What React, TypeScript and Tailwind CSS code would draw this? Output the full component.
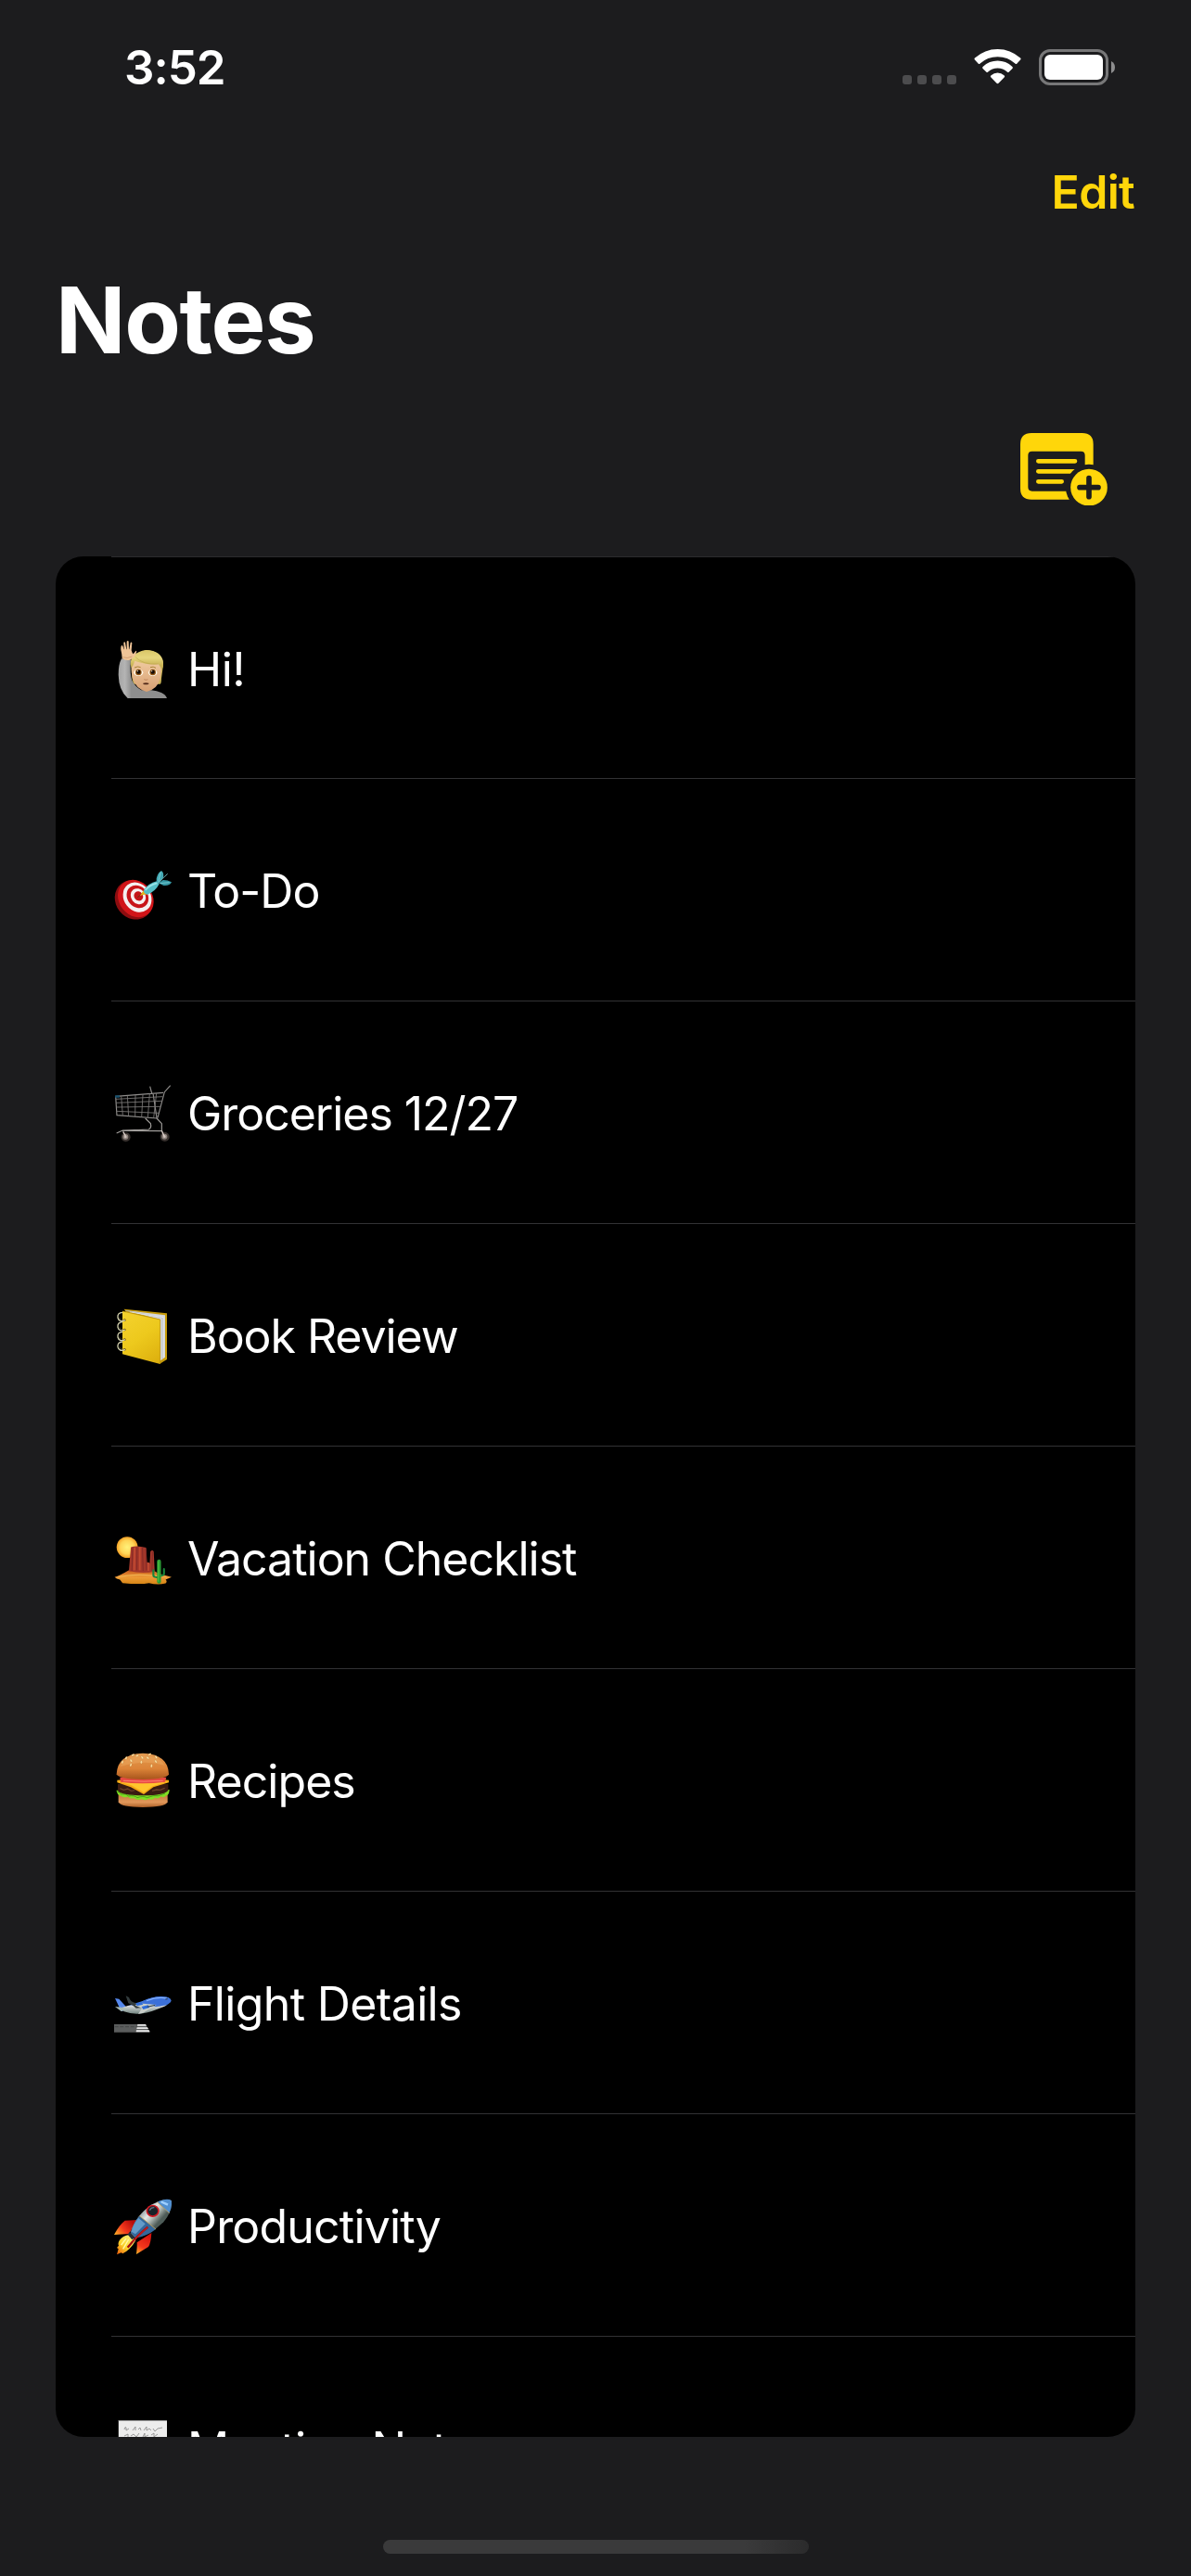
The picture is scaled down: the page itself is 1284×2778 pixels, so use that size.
import type { ReactNode } from "react";

function Emoji({ viewBox = "69 60 186 186", children }: { viewBox?: string; children: ReactNode }) {
  return (
    <svg viewBox={viewBox} className="h-[62px] w-[62px] shrink-0" fill="none" aria-hidden="true">
      {children}
    </svg>
  );
}

function PersonRaisingHand() {
  return (
    <Emoji viewBox="219 300 186 186">
      <defs>
        <linearGradient id="sleeve" x1="233" y1="0" x2="275" y2="0" gradientUnits="userSpaceOnUse">
          <stop stopColor="#a3a3a3" />
          <stop offset="0.5" stopColor="#b4b4b4" />
          <stop offset="1" stopColor="#8e8e8e" />
        </linearGradient>
        <linearGradient id="skin" x1="0" y1="350" x2="0" y2="466" gradientUnits="userSpaceOnUse">
          <stop stopColor="#f3d0a6" />
          <stop offset="1" stopColor="#d79f72" />
        </linearGradient>
        <linearGradient id="hair" x1="0" y1="330" x2="0" y2="380" gradientUnits="userSpaceOnUse">
          <stop stopColor="#d9c667" />
          <stop offset="0.5" stopColor="#e6d67d" />
          <stop offset="1" stopColor="#c9b255" />
        </linearGradient>
      </defs>
      <path d="M275 384q-3-40 48-54q56 6 55 48l-6 44q0 18-5 18h-83q-8-6-9-56z" fill="url(#hair)" />
      <path d="M243 358q-10 18-10 52q1 50 30 76h127q-4-12-18-18q-14-6-33-8l-32 0q-20-12-30-32q-8-20-4-66z" fill="url(#sleeve)" />
      <path d="M275 392q0-24 6-28q50 18 90 10q2 30-3 48q-8 34-44 43q-36-10-46-45q-3-14-3-28z" fill="url(#skin)" />
      <path d="M272 376q0-38 50-46q52 2 56 42q0 18-6 20q-3-8-10-17q-50 4-75-23q0 20-12 36z" fill="url(#hair)" />
      <path d="M287 352q26 27 75 23" stroke="#b69e48" strokeWidth="1.5" />
      <path d="M245 358q-1-18-4-28q-1-14 3-16q4 1 6 14l1 0l-1-22q3-4 5 0l4 22h1v-26q4-4 6 0l1 26h1l4-22q4-3 5 1l-2 24q2 8 6 12l8-10q4-2 2 4q-2 14-13 20l-7 5q-14 3-26-4z" fill="#efc497" />
      <path d="M247 353q14 6 30-2" stroke="#c58f62" strokeWidth="2" />
      <ellipse cx="298" cy="403" rx="15" ry="11" fill="#fff8e9" />
      <ellipse cx="344" cy="403" rx="14" ry="11" fill="#fff8e9" />
      <circle cx="298" cy="402" r="10" fill="#965714" />
      <circle cx="344" cy="402" r="10" fill="#965714" />
      <circle cx="298" cy="401" r="6.500" fill="#170c04" />
      <circle cx="344" cy="401" r="6.500" fill="#170c04" />
      <circle cx="295" cy="398" r="1.800" fill="#fff" />
      <circle cx="341" cy="398" r="1.800" fill="#fff" />
      <path d="M285 387q10-6 20-1M336 386q10-4 18 2" stroke="#a98338" strokeWidth="3" />
      <path d="M316 425q6 4 12 0" stroke="#b87c50" strokeWidth="2.500" />
      <path d="M313 437q9-2 18 0v3q-9 3-18 0z" fill="#532a1a" />
    </Emoji>
  );
}

function Dart() {
  return (
    <Emoji>
      <ellipse cx="133" cy="181" rx="59" ry="66" transform="rotate(-38 133 181)" fill="#8d0d10" />
      <ellipse cx="139" cy="177" rx="54" ry="64" transform="rotate(-38 139 177)" fill="#d01519" />
      <ellipse cx="144" cy="173" rx="43" ry="51" transform="rotate(-38 144 173)" fill="#f4f0f0" />
      <ellipse cx="145" cy="171" rx="33" ry="39" transform="rotate(-38 145 171)" fill="#c81519" />
      <ellipse cx="147" cy="170" rx="23" ry="27" transform="rotate(-38 147 170)" fill="#f6f1f1" />
      <ellipse cx="148" cy="169" rx="14" ry="16" transform="rotate(-38 148 169)" fill="#c5161a" />
      <path d="M145 173l22-18" stroke="#6b3410" strokeWidth="3" />
      <path d="M152 168l13-18 14 13-16 2z" fill="#e3b419" />
      <path d="M165 150q14-22 42-29l8 9q-12 24-38 34q-13-2-12-14z" fill="#56bfc7" />
      <path d="M170 150q14-17 38-23" stroke="#9be4e8" strokeWidth="5" />
      <path d="M206 121q-1-24 16-34q9 6 6 22l-14 19z" fill="#43a9b4" />
      <path d="M213 127l14-10q16 0 28 7q-6 13-26 11z" fill="#3697a4" />
      <path d="M210 127l32-30M220 91l-8 31M248 125l-31 3" stroke="#7fd0d6" strokeWidth="2.500" />
    </Emoji>
  );
}

function ShoppingCart() {
  return (
    <Emoji>
      <path d="M251 62l-19 21-22 83M74 97l154-12M77 158l131 10M74 97l4 63M185 65l6 22M195 87l12 80" stroke="#8f8d8b" strokeWidth="3.500" />
      <path d="M75 106l151-8M75 118l148-6M76 132l143-2M77 145l138 6M92 97l5 61M112 95l4 66M138 93l-1 69M162 91l-4 74M184 89l-6 77M206 87l-9 80" stroke="#7b7977" strokeWidth="2.600" />
      <path d="M170 168l17 17q4 14-6 19l-85 4M207 168l16 17v24M77 216l18-8 128 1" stroke="#a19e9b" strokeWidth="3.500" />
      <path d="M72 94h15v7h-15z" fill="#17516f" />
      <circle cx="107" cy="229" r="15" fill="#39322f" />
      <circle cx="233" cy="228" r="15" fill="#39322f" />
      <circle cx="106" cy="228" r="9" fill="#8f857f" />
      <circle cx="232" cy="227" r="9" fill="#8f857f" />
      <circle cx="106" cy="228" r="4" fill="#d0c3bd" />
      <circle cx="232" cy="227" r="4" fill="#d0c3bd" />
      <path d="M98 211l8 14M223 208l8 18" stroke="#ddd1cb" strokeWidth="4" />
    </Emoji>
  );
}

function Ledger() {
  return (
    <Emoji>
      <defs>
        <linearGradient id="cover" x1="97" y1="70" x2="218" y2="240" gradientUnits="userSpaceOnUse">
          <stop stopColor="#f4d22f" />
          <stop offset="0.5" stopColor="#edc91d" />
          <stop offset="1" stopColor="#dcae0d" />
        </linearGradient>
      </defs>
      <path d="M101 65l139 14v149l-23 14z" fill="#c59b0b" />
      <path d="M104 69l130 16v136l-17 12V98z" fill="#d4d7dc" />
      <path d="M106 70l120 23v132" stroke="#a3a7ad" strokeWidth="2" />
      <path d="M120 75l108 17v131" stroke="#f4f4f4" strokeWidth="2" />
      <path d="M96 72l122 27v144L96 211z" fill="url(#cover)" />
      <path d="M96 72l122 27v143" stroke="#b78c08" strokeWidth="2" />
      {[90, 121, 153, 185].map((y) => (
        <g key={y}>
          <circle cx="103" cy={y + 11} r="4" fill="#6f5707" />
          <path d={`M105 ${y + 11}q-20 8-24-8q-2-16 15-17`} stroke="#d2d0ad" strokeWidth="4" />
          <path d={`M99 ${y + 10}q-12 1-14-9`} stroke="#706a42" strokeWidth="1.500" />
        </g>
      ))}
    </Emoji>
  );
}

function Desert() {
  return (
    <Emoji viewBox="64.400 56 173.600 173.600">
      <defs>
        <radialGradient id="sun">
          <stop stopColor="#fff27a" />
          <stop offset="0.65" stopColor="#ffd456" />
          <stop offset="1" stopColor="#f2a025" />
        </radialGradient>
        <linearGradient id="sand" x1="0" y1="178" x2="0" y2="220" gradientUnits="userSpaceOnUse">
          <stop stopColor="#c85c1e" />
          <stop offset="0.5" stopColor="#ed9b36" />
          <stop offset="1" stopColor="#d58413" />
        </linearGradient>
      </defs>
      <circle cx="104" cy="108" r="32" fill="url(#sun)" />
      <path d="M66 198q16-4 42-20h75q16 12 55 20l-18 8q6 6 0 11q-24 6-50-1q-27 5-80 0l-8-10q-11-2-16-8z" fill="url(#sand)" />
      <path d="M109 180l6-72q16-7 46 1l3 44 8 4 2-36q6-7 10 0l3 60q-35 8-78-1z" fill="#a4372a" />
      <path d="M121 108l-3 71M134 107l-1 70M150 108l2 71M160 112l2 65M180 121l-1 58" stroke="#862b27" strokeWidth="3" />
      <path d="M126 109l-1 69M142 108v70M168 154v25" stroke="#c14a32" strokeWidth="5" />
      <path d="M74 199q60-15 150 0" stroke="#f1b250" strokeWidth="3" />
      <path d="M183 177v16q0 5 15 6M215 174v14q0 5-15 7" stroke="#19843a" strokeWidth="6" strokeLinecap="round" />
      <path d="M200 151v61" stroke="#2b9c35" strokeWidth="12" strokeLinecap="round" />
      <path d="M198 150v62" stroke="#51c33d" strokeWidth="3" />
    </Emoji>
  );
}

function Hamburger() {
  return (
    <Emoji>
      <defs>
        <linearGradient id="bun" x1="0" y1="62" x2="0" y2="145" gradientUnits="userSpaceOnUse">
          <stop stopColor="#e29a50" />
          <stop offset="0.6" stopColor="#dc8438" />
          <stop offset="1" stopColor="#aa571d" />
        </linearGradient>
        <linearGradient id="heel" x1="0" y1="195" x2="0" y2="237" gradientUnits="userSpaceOnUse">
          <stop stopColor="#c8793c" />
          <stop offset="0.6" stopColor="#e1985b" />
          <stop offset="1" stopColor="#ad6027" />
        </linearGradient>
      </defs>
      <path d="M83 194h159v26q-7 17-80 17q-72 0-79-17z" fill="url(#heel)" />
      <path d="M77 182l171-2q-1 18-10 19q-8 9-17 3q-9 10-20 4q-8 10-20 3q-12 9-23 1q-13 7-24-2q-13 3-20-5q-15 5-21-2q-15-3-16-19z" fill="#83dc24" />
      <path d="M77 185q10 3 15 10q15-4 24 6q18-4 28 5q20-7 31 0q23-9 37-6l22-8" stroke="#48a616" strokeWidth="3" />
      <path d="M81 162h163v20q-9 16-81 17q-74-1-82-16z" fill="#3a1c12" />
      <path d="M88 176l12 5 13-4 11 7 12-2m56 2 14-4 12 1 15-6" stroke="#69402a" strokeWidth="4" />
      <path d="M79 149q82-10 167 0v8l-50 15-31 23q-24-13-42-23l-44-15z" fill="#f6a916" />
      <path d="M83 154q73 5 160 0l-50 15-28 20-40-23z" fill="#ffc62d" />
      <path d="M88 140h150l-4 15q-75 9-144 0z" fill="#e84a42" />
      <path d="M99 151q68 5 128 0" stroke="#ff8072" strokeWidth="3" />
      <path d="M77 130q2-65 85-68q82 3 84 68q-4 16-84 17q-80-1-85-17z" fill="url(#bun)" />
      <path d="M88 106q17-34 70-36q56 0 74 31q-67-20-144 5z" fill="#efb067" fillOpacity=".4" />
      {[[108, 78, 30], [124, 86, -35], [144, 70, 70], [160, 76, -40], [178, 77, -50], [184, 66, 60], [130, 68, 60], [205, 75, -35], [204, 89, -40], [190, 103, 5], [123, 100, 20], [96, 91, 25], [157, 91, 0]].map(([x, y, r]) => (
        <ellipse key={`${x}-${y}`} cx={x} cy={y} rx="3" ry="5.500" transform={`rotate(${r} ${x} ${y})`} fill="#ffe4a3" stroke="#a86b31" strokeWidth="0.800" />
      ))}
    </Emoji>
  );
}

function AirplaneDeparture() {
  return (
    <Emoji>
      <defs>
        <linearGradient id="fuselage" x1="0" y1="130" x2="0" y2="185" gradientUnits="userSpaceOnUse">
          <stop stopColor="#699ff5" />
          <stop offset="0.45" stopColor="#3468cb" />
          <stop offset="0.55" stopColor="#d5d8d8" />
          <stop offset="1" stopColor="#71847f" />
        </linearGradient>
      </defs>
      <path d="M69 219h102l13 26H69z" fill="#5b5d5d" />
      <path d="M71 227h74" stroke="#444646" strokeWidth="3" strokeDasharray="12 5" />
      <path d="M145 219h26l3 5h-30zM143 229h34l3 5h-38zM141 238h41l3 6h-45z" fill="#e9e9e9" />
      <path d="M72 135l13 2 30 33-23 7z" fill="#5588ec" />
      <path d="M94 165q36-11 69-22q39-18 77-12q19 7 11 17q-13 14-42 22q-60 25-108 8z" fill="url(#fuselage)" />
      <path d="M160 145q44-21 80-14q19 7 10 17q-15 12-45 14l-34-3z" fill="#3c70d8" />
      <path d="M174 143q35-14 65-8" stroke="#83b0ff" strokeWidth="4" />
      <path d="M107 127l10 5q4 16 25 19l35 13-37 3q-16-13-25-16z" fill="#343d3e" />
      <path d="M72 162l21 2 22 7-23 6z" fill="#a9bab4" />
      <path d="M146 151l60 5-43 26-16 4 12-19-22-9z" fill="#c8ceca" />
      <path d="M139 150l19-1 5 6-20 5zM158 162l21-5 5 8-21 6z" fill="#2f6dda" />
      <path d="M176 163l26-6M235 138l7-1" stroke="#273747" strokeWidth="3" />
    </Emoji>
  );
}

function Rocket() {
  return (
    <Emoji>
      <defs>
        <linearGradient id="hull" x1="153" y1="96" x2="208" y2="145" gradientUnits="userSpaceOnUse">
          <stop stopColor="#707e83" />
          <stop offset="0.45" stopColor="#e4e9e7" />
          <stop offset="0.65" stopColor="#b9c1bd" />
          <stop offset="1" stopColor="#4d5b57" />
        </linearGradient>
        <linearGradient id="fin" x1="124" y1="135" x2="70" y2="182" gradientUnits="userSpaceOnUse">
          <stop stopColor="#b80d0b" />
          <stop offset="0.5" stopColor="#f4381d" />
          <stop offset="1" stopColor="#ffbd26" />
        </linearGradient>
        <linearGradient id="fin-right" x1="180" y1="180" x2="141" y2="243" gradientUnits="userSpaceOnUse">
          <stop stopColor="#d5130e" />
          <stop offset="0.6" stopColor="#f4381d" />
          <stop offset="1" stopColor="#ffbd26" />
        </linearGradient>
        <linearGradient id="flame" x1="128" y1="182" x2="78" y2="241" gradientUnits="userSpaceOnUse">
          <stop stopColor="#fff584" />
          <stop offset="0.55" stopColor="#fbd42b" />
          <stop offset="1" stopColor="#ed5f0b" />
        </linearGradient>
      </defs>
      <path d="M145 132l-41 2q-20 16-35 46l48-3z" fill="url(#fin)" />
      <path d="M190 174q-2 34-10 45l-39 24q3-27 2-38z" fill="url(#fin-right)" />
      <path d="M118 180q-22 4-31 17q-7 10-3 18l-6 7 5 4-5 18 14-6 5 3q25-13 42-43z" fill="url(#flame)" />
      <path d="M119 171l21 16-13 9-14-17z" fill="#26303a" />
      <path d="M123 173q16-56 69-91q40-22 62-13q5 34-25 70q-44 43-90 51z" fill="url(#hull)" />
      <path d="M209 74q30-14 45-5q4 20-7 41z" fill="#518fd0" />
      <path d="M221 73l22 10" stroke="#9ecfff" strokeWidth="7" />
      <path d="M151 119l53 43q-31 24-65 28l-16-17q7-30 28-54z" fill="#34689c" />
      <path d="M148 126l22 19-32 33-13-8q6-25 23-44z" fill="#649bc8" />
      <path d="M151 119l53 43M208 74l40 36" stroke="#c6a052" strokeWidth="2.500" />
      <ellipse cx="194" cy="103" rx="21" ry="20" fill="#cf1822" />
      <ellipse cx="194" cy="103" rx="16" ry="15" fill="#182229" />
      <path d="M184 101q4-10 15-9" stroke="#607383" strokeWidth="4" />
      <path d="M178 155q-34 28-65 66" stroke="#a70f12" strokeWidth="7" />
      <path d="M177 156q-29 24-47 48" stroke="#e6322a" strokeWidth="2" />
      <path d="M116 195l-18 31M108 192l-16 21" stroke="#fff9a7" strokeWidth="4" />
    </Emoji>
  );
}

function Memo() {
  return (
    <Emoji viewBox="0 0 62 62">
      <path d="M4.800 0h52.200v62H4.800z" fill="#ececec" />
      <path d="M4.800 .500h52.200" stroke="#9a9a9a" />
      <path d="M11 10q1-4 2-2l0 3 3-2m4 2 3-4v4m3-1 2-2 1 3m3 0 3-4v4l3-2 2 2m2-2 2 3 3-3 5-1M11 17l4-2v3m3-1 3-2 3 3 3-4m4 4 2-4v4l4-2m3 0 3-2v4l4-3" stroke="#858585" strokeWidth=".800" />
    </Emoji>
  );
}

const notes = [
  { icon: <PersonRaisingHand />, title: "Hi!", tracking: "tracking-[-0.5px]" },
  { icon: <Dart />, title: "To-Do", tracking: "tracking-[-1px]" },
  { icon: <ShoppingCart />, title: "Groceries 12/27", tracking: "tracking-[-1.05px]" },
  { icon: <Ledger />, title: "Book Review", tracking: "tracking-[-1.05px]" },
  { icon: <Desert />, title: "Vacation Checklist", tracking: "tracking-[-1px]" },
  { icon: <Hamburger />, title: "Recipes", tracking: "tracking-[-0.95px]" },
  { icon: <AirplaneDeparture />, title: "Flight Details", tracking: "tracking-[-0.65px]" },
  { icon: <Rocket />, title: "Productivity", tracking: "tracking-[-0.8px]" },
  { icon: <Memo />, title: "Meeting Notes", tracking: "tracking-[-0.95px]" },
];

function StatusBar() {
  return (
    <header className="flex h-[144px] shrink-0 items-center justify-between pr-[82px] pl-[134px]">
      <div className="pt-[2px] text-[51px] leading-[60px] font-semibold tracking-[-1px]">3:52</div>
      <div className="flex items-center">
        <div className="mt-[28px] flex gap-[6px]">
          <i className="size-[10px] rounded-[3px] bg-[#4c4c4e]" />
          <i className="size-[10px] rounded-[3px] bg-[#4c4c4e]" />
          <i className="size-[10px] rounded-[3px] bg-[#4c4c4e]" />
          <i className="size-[10px] rounded-[3px] bg-[#4c4c4e]" />
        </div>
        <svg viewBox="331 71 152 113" className="ml-[19px] h-[37.500px] w-[51px]" fill="#fff">
          <path d="M407 71q-42 0-74 29q-3 3 0 6l11 12q3 3 6 0q24-22 57-22t57 22q3 3 6 0l11-12q3-3 0-6q-32-29-74-29z" />
          <path d="M407 109q-27 0-48 19q-3 3 0 6l11 11q3 3 6 0q13-12 31-12t31 12q3 3 6 0l11-11q3-3 0-6q-21-19-48-19z" />
          <path d="M407 148q-12 0-21 8q-4 3-1 6l19 20q3 3 6 0l19-20q3-3-1-6q-9-8-21-8z" />
        </svg>
        <div className="ml-[19px] flex h-[39px] w-[75px] rounded-[12px] border-[3px] border-[#777778] p-[3px]">
          <div className="flex-1 rounded-[6px] bg-white" />
        </div>
        <svg viewBox="0 0 4 13" className="ml-[3px] h-[13px] w-[4px]" fill="#8d8d8e">
          <path d="M0 0Q4 2 4 6.500T0 13z" />
        </svg>
      </div>
    </header>
  );
}

function NewNoteIcon() {
  return (
    <svg viewBox="120 80 282 235" className="h-[78.333px] w-[94px]" fill="none">
      <defs>
        <mask id="badge-gap" maskUnits="userSpaceOnUse" x="120" y="80" width="282" height="235">
          <path d="M120 80h282v235H120z" fill="#fff" />
          <circle cx="342" cy="256" r="75" fill="#000" />
        </mask>
      </defs>
      <g mask="url(#badge-gap)">
        <path
          fillRule="evenodd"
          fill="#ffd60a"
          d="M156 80h164q36 0 36 36v143q0 36-36 36H156q-36 0-36-36V116q0-36 36-36zm2 59q-13 0-13 13v103q0 13 13 13h158q13 0 13-13V152q0-13-13-13z"
        />
        <path d="M178 171h119M178 204h119M178 237h76" stroke="#ffd60a" strokeWidth="14" strokeLinecap="round" />
      </g>
      <circle cx="342" cy="256" r="59.500" fill="#ffd60a" />
      <path d="M312 256h60M342 226v60" stroke="#1c1c1e" strokeWidth="17" strokeLinecap="round" />
    </svg>
  );
}

export default function App() {
  return (
    <main className="flex h-[2778px] w-[1284px] flex-col overflow-hidden bg-[#1c1c1e] font-['Inter',sans-serif] text-white">
      <StatusBar />
      <nav className="flex h-[126px] shrink-0 items-center justify-end pr-[61px]">
        <button className="text-[50px] leading-[60px] font-semibold tracking-[-0.7px] text-[#ffd60a]">Edit</button>
      </nav>
      <h1 className="flex h-[150px] shrink-0 items-center pl-[60px] text-[99px] leading-[120px] font-bold tracking-[-1.3px]">Notes</h1>
      <div className="flex h-[180px] shrink-0 items-start justify-end pt-[46.667px] pr-[90px]">
        <button aria-label="New note">
          <NewNoteIcon />
        </button>
      </div>
      <ul className="mx-[60px] h-[2028px] shrink-0 overflow-hidden rounded-[30px] bg-black">
        {notes.map(({ icon, title, tracking }, index) => (
          <li key={title} className="flex h-[240px] pl-[60px]">
            <div className={`flex flex-1 items-center border-b border-[#323234] pt-[3px] pl-[3px] ${index === 0 ? "border-t border-t-[#2c2c2e]" : ""}`}>
              {icon}
              <span className={`ml-[17px] text-[50px] leading-[60px] whitespace-nowrap ${tracking}`}>{title}</span>
            </div>
          </li>
        ))}
      </ul>
      <footer className="flex h-[150px] shrink-0 items-end justify-center pb-[24px]">
        <div className="h-[15px] w-[459px] rounded-full bg-linear-to-r from-[#3a3a3b] from-85% to-[#2b2b2c]" />
      </footer>
    </main>
  );
}
